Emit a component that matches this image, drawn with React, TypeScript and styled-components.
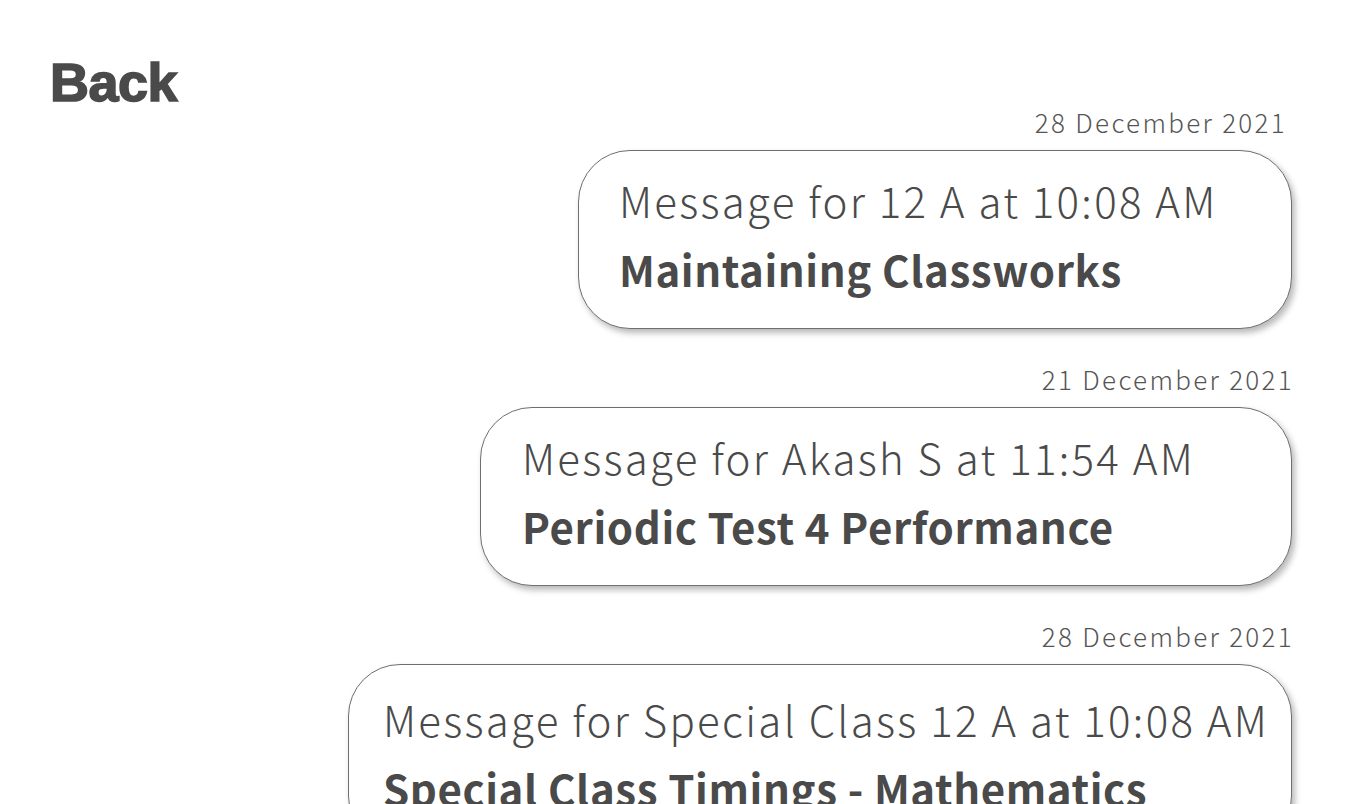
import styled, { createGlobalStyle } from "styled-components";

const GlobalStyle = createGlobalStyle`
  html, body {
    margin: 0;
    padding: 0;
    background: #ffffff;
  }
  body {
    font-family: "Noto Sans CJK JP", "Noto Sans", sans-serif;
    color: #4a4a4a;
  }
`;

const Page = styled.div`
  width: 1366px;
  height: 804px;
  overflow: hidden;
  box-sizing: border-box;
  padding: 56px 74px 0 50px;
`;

const BackLink = styled.a`
  display: block;
  width: fit-content;
  font-family: "Liberation Sans", Arial, sans-serif;
  font-weight: 700;
  font-size: 54px;
  line-height: 52px;
  letter-spacing: -0.5px;
  color: #4a4a4a;
  -webkit-text-stroke: 1.6px #4a4a4a;
  text-decoration: none;
  cursor: pointer;
`;

const MessageList = styled.div`
  display: flex;
  flex-direction: column;
  align-items: flex-end;
  gap: 36px;
`;

const MessageItem = styled.div`
  display: flex;
  flex-direction: column;
  align-items: flex-end;
  gap: 14px;
`;

const DateLabel = styled.div<{ $inset: number }>`
  font-size: 26px;
  font-weight: 300;
  line-height: 28px;
  letter-spacing: 2.3px;
  color: #555555;
  margin-right: ${(p) => p.$inset}px;
`;

const Bubble = styled.div<{ $width: number; $pad: number; $top: number }>`
  box-sizing: border-box;
  width: ${(p) => p.$width}px;
  padding: ${(p) => p.$top}px 20px 25px ${(p) => p.$pad}px;
  border: 1px solid #6f6f6f;
  border-radius: 52px;
  background: #ffffff;
  box-shadow: 3px 4px 6px rgba(0, 0, 0, 0.28);
`;

const Recipient = styled.div`
  font-size: 42px;
  font-weight: 300;
  line-height: 69px;
  letter-spacing: 2.3px;
  color: #4a4a4a;
  white-space: nowrap;
`;

const Subject = styled.div`
  font-size: 42px;
  font-weight: 700;
  line-height: 69px;
  letter-spacing: 0.6px;
  color: #4a4a4a;
  white-space: nowrap;
`;

const messages = [
  {
    date: "28 December 2021",
    inset: 5,
    recipient: "Message for 12 A at 10:08 AM",
    subject: "Maintaining Classworks",
    width: 714,
    pad: 40,
    top: 14,
  },
  {
    date: "21 December 2021",
    inset: -2,
    recipient: "Message for Akash S at 11:54 AM",
    subject: "Periodic Test 4 Performance",
    width: 812,
    pad: 41,
    top: 14,
  },
  {
    date: "28 December 2021",
    inset: -2,
    recipient: "Message for Special Class 12 A at 10:08 AM",
    subject: "Special Class Timings - Mathematics",
    width: 944,
    pad: 34,
    top: 19,
  },
];

export default function App() {
  return (
    <Page>
      <GlobalStyle />
      <BackLink>Back</BackLink>
      <MessageList>
        {messages.map((m, i) => (
          <MessageItem key={i}>
            <DateLabel $inset={m.inset}>{m.date}</DateLabel>
            <Bubble $width={m.width} $pad={m.pad} $top={m.top}>
              <Recipient>{m.recipient}</Recipient>
              <Subject>{m.subject}</Subject>
            </Bubble>
          </MessageItem>
        ))}
      </MessageList>
    </Page>
  );
}
